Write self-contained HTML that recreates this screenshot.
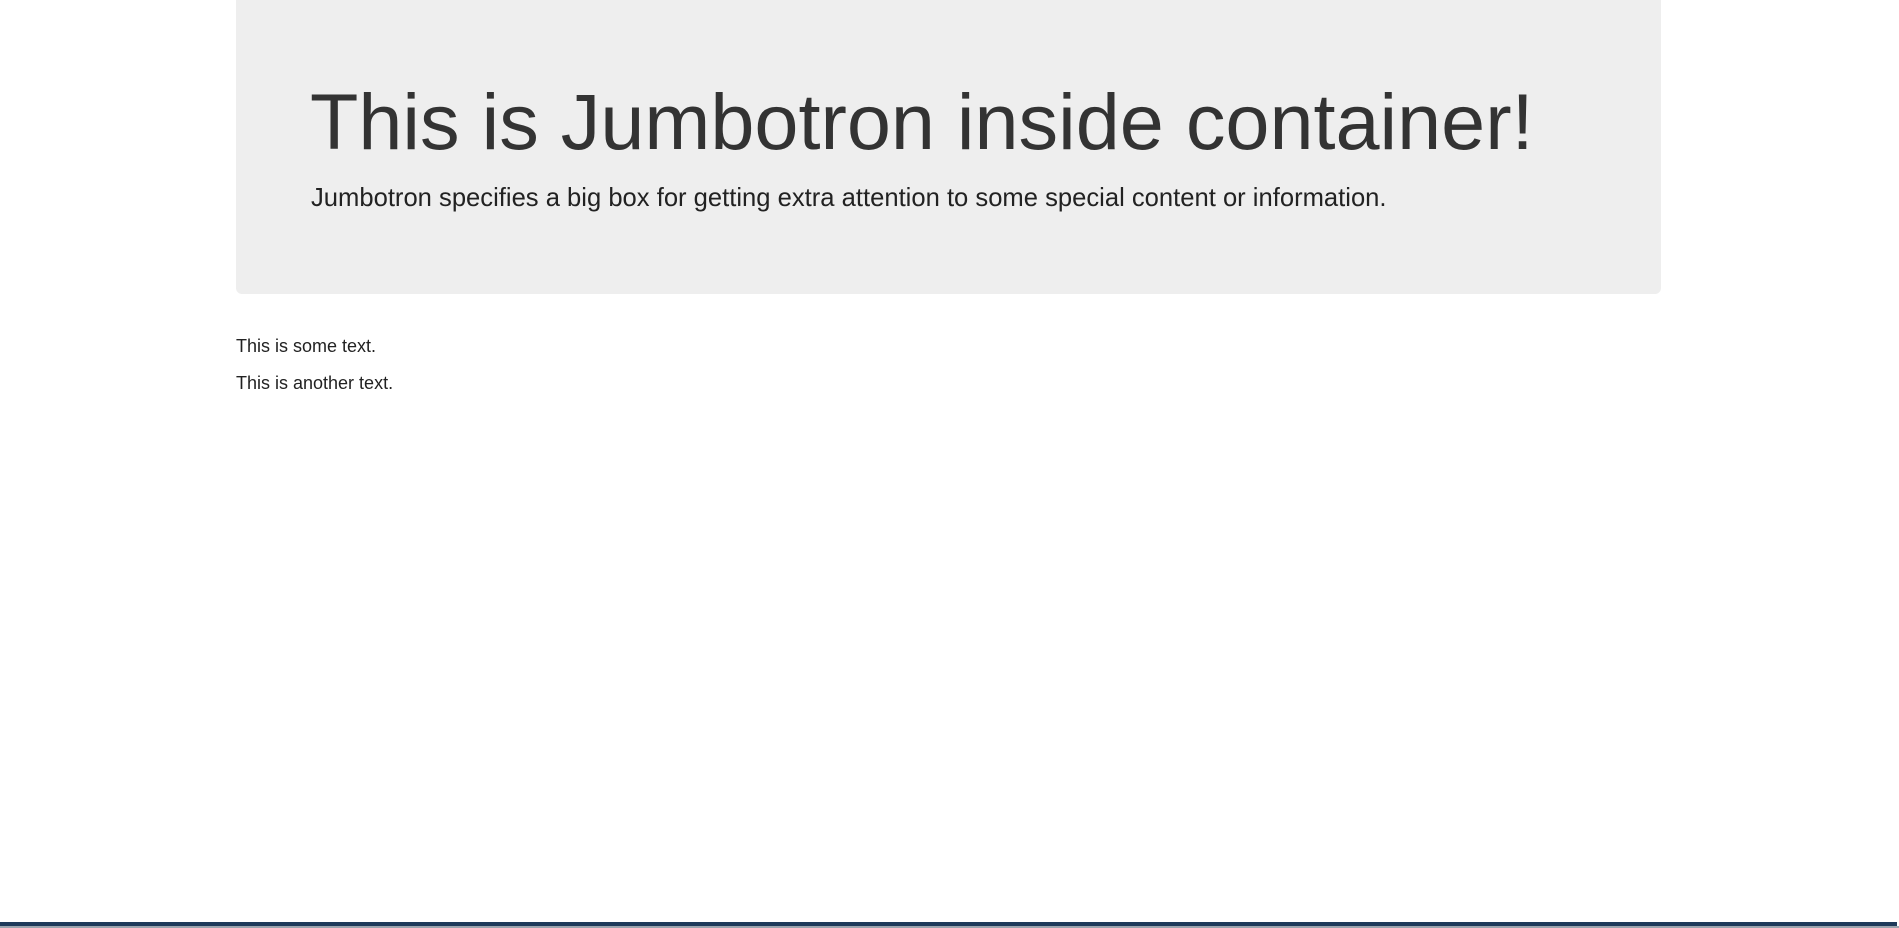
<!DOCTYPE html>
<html><head><style>
html,body{margin:0;padding:0;background:#fff;width:1899px;height:928px;overflow:hidden;position:relative;font-family:"Liberation Sans",Arial,sans-serif;color:#333}
.jb{position:absolute;left:236px;top:-10px;width:1425px;height:304px;background:#eee;border-radius:6px}
h1{position:absolute;left:310px;top:74px;margin:0;font-size:79.2px;font-weight:normal;line-height:96px;color:#333;white-space:nowrap}
.sub{position:absolute;left:311px;top:183px;margin:0;font-size:25.6px;line-height:30px;color:#222;white-space:nowrap}
.t{position:absolute;left:236px;margin:0;font-size:18px;line-height:20px;color:#222}
.bar{position:absolute;left:0;top:922px;width:1897px;height:4px;background:#1e3a5a}
.bar2{position:absolute;left:0;top:926px;width:1899px;height:2px;background:#9aa4ae}
</style></head><body>
<div class="jb"></div>
<h1>This is Jumbotron inside container!</h1>
<p class="sub">Jumbotron specifies a big box for getting extra attention to some special content or information.</p>
<p class="t" style="top:336px">This is some text.</p>
<p class="t" style="top:373px">This is another text.</p>
<div class="bar"></div><div class="bar2"></div>
</body></html>
